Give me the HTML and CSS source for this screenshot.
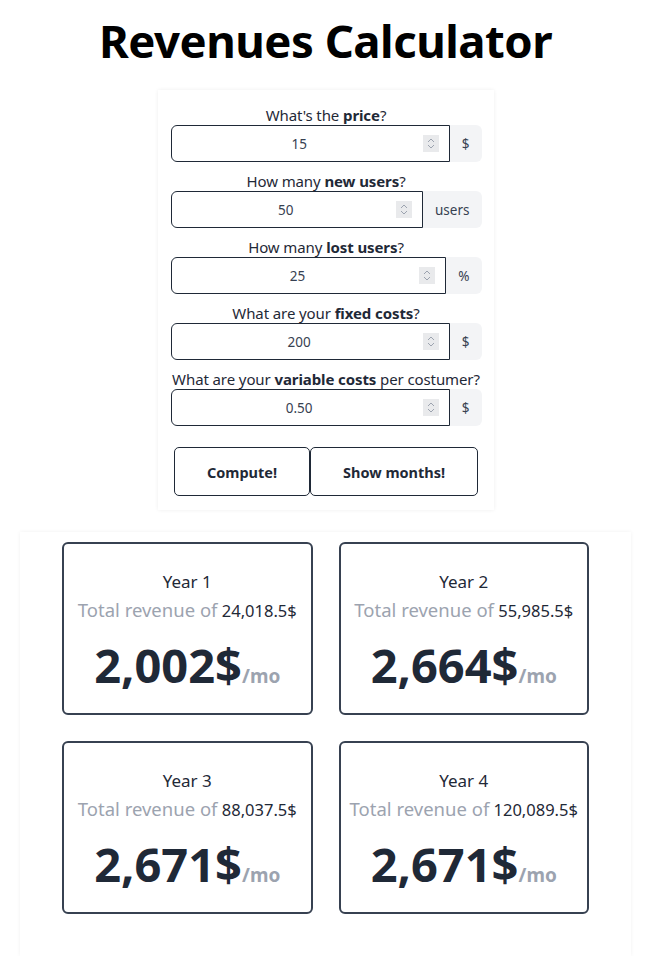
FILE: index.html
```html
<!DOCTYPE html>
<html>
<head>
<meta charset="utf-8">
<link rel="stylesheet" href="styles.css">
</head>
<body>
<div class="page">
  <h1 class="title">Revenues Calculator</h1>
  <form class="form-card">
    <div class="fields">
      <div class="field">
        <label class="label">What's the <b>price</b>?</label>
        <div class="group">
          <div class="input-wrap"><input class="input" type="text" value="15"><span class="spin"><svg width="10" height="13" viewBox="0 0 10 13"><path d="M2 5 L5 2 L8 5 M2 8 L5 11 L8 8" fill="none" stroke="#9ca3af" stroke-width="1"/></svg></span></div>
          <span class="addon">$</span>
        </div>
      </div>
      <div class="field">
        <label class="label">How many <b>new users</b>?</label>
        <div class="group">
          <div class="input-wrap"><input class="input" type="text" value="50"><span class="spin"><svg width="10" height="13" viewBox="0 0 10 13"><path d="M2 5 L5 2 L8 5 M2 8 L5 11 L8 8" fill="none" stroke="#9ca3af" stroke-width="1"/></svg></span></div>
          <span class="addon">users</span>
        </div>
      </div>
      <div class="field">
        <label class="label">How many <b>lost users</b>?</label>
        <div class="group">
          <div class="input-wrap"><input class="input" type="text" value="25"><span class="spin"><svg width="10" height="13" viewBox="0 0 10 13"><path d="M2 5 L5 2 L8 5 M2 8 L5 11 L8 8" fill="none" stroke="#9ca3af" stroke-width="1"/></svg></span></div>
          <span class="addon">%</span>
        </div>
      </div>
      <div class="field">
        <label class="label">What are your <b>fixed costs</b>?</label>
        <div class="group">
          <div class="input-wrap"><input class="input" type="text" value="200"><span class="spin"><svg width="10" height="13" viewBox="0 0 10 13"><path d="M2 5 L5 2 L8 5 M2 8 L5 11 L8 8" fill="none" stroke="#9ca3af" stroke-width="1"/></svg></span></div>
          <span class="addon">$</span>
        </div>
      </div>
      <div class="field">
        <label class="label">What are your <b>variable costs</b> per costumer?</label>
        <div class="group">
          <div class="input-wrap"><input class="input" type="text" value="0.50"><span class="spin"><svg width="10" height="13" viewBox="0 0 10 13"><path d="M2 5 L5 2 L8 5 M2 8 L5 11 L8 8" fill="none" stroke="#9ca3af" stroke-width="1"/></svg></span></div>
          <span class="addon">$</span>
        </div>
      </div>
    </div>
    <div class="buttons">
      <button type="button" class="btn">Compute!</button>
      <button type="button" class="btn">Show months!</button>
    </div>
  </form>

  <section class="results">
    <div class="card">
      <div class="year">Year 1</div>
      <div class="total"><span class="muted">Total revenue of</span> 24,018.5$</div>
      <div class="monthly">2,002$<span class="per">/mo</span></div>
    </div>
    <div class="card">
      <div class="year">Year 2</div>
      <div class="total"><span class="muted">Total revenue of</span> 55,985.5$</div>
      <div class="monthly">2,664$<span class="per">/mo</span></div>
    </div>
    <div class="card">
      <div class="year">Year 3</div>
      <div class="total"><span class="muted">Total revenue of</span> 88,037.5$</div>
      <div class="monthly">2,671$<span class="per">/mo</span></div>
    </div>
    <div class="card">
      <div class="year">Year 4</div>
      <div class="total"><span class="muted">Total revenue of</span> 120,089.5$</div>
      <div class="monthly">2,671$<span class="per">/mo</span></div>
    </div>
  </section>
</div>
</body>
</html>
```

FILE: styles.css
```css
* { box-sizing: border-box; }
html, body { margin: 0; padding: 0; background: #fff; }
body {
  font-family: "Noto Sans", "Open Sans", sans-serif;
  color: #1f2937;
}
.page {
  width: 651px;
  display: flex;
  flex-direction: column;
  align-items: center;
  padding-top: 16px;
}
.title {
  margin: 0;
  font-size: 45.5px;
  line-height: 48px;
  font-weight: 700;
  color: #000;
  letter-spacing: -0.5px;
}
.form-card {
  margin-top: 26px;
  width: 336px;
  padding: 15px 12px 14px 13px;
  background: #fff;
  box-shadow: 0 0 4px rgba(0,0,0,0.07);
  display: flex;
  flex-direction: column;
}
.fields {
  display: flex;
  flex-direction: column;
  gap: 9px;
}
.field {
  display: flex;
  flex-direction: column;
  align-items: center;
}
.label {
  text-align: center;
  font-size: 15px;
  line-height: 20px;
  color: #1f2937;
  white-space: nowrap;
  letter-spacing: -0.1px;
}
.label b { font-weight: 700; }
.group {
  display: flex;
  height: 37px;
  width: 100%;
}
.input-wrap {
  position: relative;
  flex: 1;
  display: flex;
}
.input {
  flex: 1;
  width: 100%;
  height: 37px;
  border: 1px solid #1f2937;
  border-radius: 6px 0 0 6px;
  text-align: center;
  font-family: inherit;
  font-size: 13.5px;
  color: #374151;
  padding: 0 30px 0 8px;
  background: #fff;
  outline: none;
}
.spin {
  position: absolute;
  right: 11px;
  top: 10px;
  width: 16px;
  height: 17px;
  background: #e9eaec;
  display: flex;
  align-items: center;
  justify-content: center;
}
.addon {
  display: flex;
  align-items: center;
  padding: 0 12px;
  background: #f3f4f6;
  border-radius: 0 6px 6px 0;
  font-size: 13.5px;
  color: #374151;
}
.buttons {
  display: flex;
  justify-content: center;
  margin-top: 21px;
}
.btn {
  height: 49px;
  padding: 0 32px;
  background: #fff;
  border: 1px solid #1f2937;
  border-radius: 5px;
  font-family: inherit;
  font-weight: 700;
  font-size: 14.5px;
  color: #1f2937;
}
.results {
  margin-top: 22px;
  width: 611px;
  padding: 10px 42px 42px;
  background: #fff;
  box-shadow: 0 0 4px rgba(0,0,0,0.06);
  display: grid;
  grid-template-columns: 1fr 1fr;
  gap: 26px;
}
.card {
  height: 173px;
  border: 2px solid #374151;
  border-radius: 6px;
  display: flex;
  flex-direction: column;
  align-items: center;
  padding-top: 26px;
}
.year {
  font-size: 17px;
  line-height: 24px;
  color: #1f2937;
}
.total {
  margin-top: 3px;
  font-size: 16.5px;
  line-height: 26px;
  color: #1f2937;
}
.muted {
  font-size: 18.5px;
  color: #9ca3af;
}
.monthly {
  margin-top: 17px;
  font-size: 47px;
  line-height: 48px;
  font-weight: 700;
  color: #1f2937;
}
.per {
  font-size: 19px;
  color: #9ca3af;
}
```
